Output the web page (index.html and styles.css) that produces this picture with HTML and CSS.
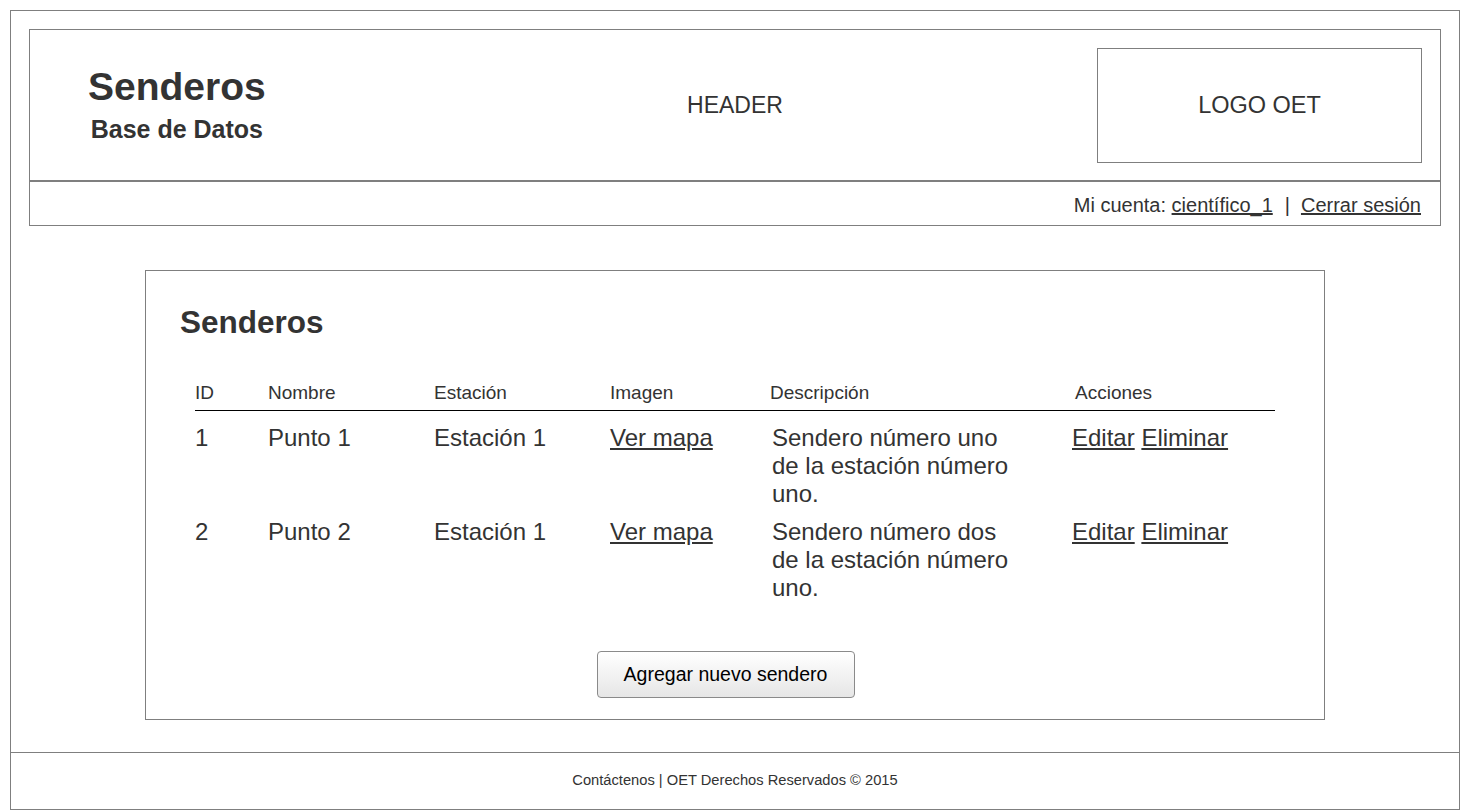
FILE: index.html
```html
<!DOCTYPE html>
<html lang="es">
<head>
    <meta charset="UTF-8">
    <meta name="viewport" content="width=device-width, initial-scale=1.0">
    <title>Senderos - Base de Datos</title>
    <link rel="stylesheet" href="styles.css">
</head>
<body>
    <div class="page">
        <header class="header">
            <div class="header-top">
                <div class="brand">
                    <h1>Senderos</h1>
                    <h2>Base de Datos</h2>
                </div>
                <div class="header-label">HEADER</div>
                <div class="logo">LOGO OET</div>
            </div>
            <nav class="account">
                Mi cuenta: <a href="#">científico_1</a><span class="sep">|</span><a href="#">Cerrar sesión</a>
            </nav>
        </header>

        <main class="main">
            <section class="card">
                <h3 class="card-title">Senderos</h3>
                <table class="trails">
                    <colgroup>
                        <col style="width: 73px">
                        <col style="width: 166px">
                        <col style="width: 176px">
                        <col style="width: 160px">
                        <col style="width: 302px">
                        <col>
                    </colgroup>
                    <thead>
                        <tr>
                            <th>ID</th>
                            <th>Nombre</th>
                            <th>Estación</th>
                            <th>Imagen</th>
                            <th>Descripción</th>
                            <th class="actions-head">Acciones</th>
                        </tr>
                    </thead>
                    <tbody>
                        <tr>
                            <td>1</td>
                            <td>Punto 1</td>
                            <td>Estación 1</td>
                            <td><a href="#">Ver mapa</a></td>
                            <td class="desc">Sendero número uno de la estación número uno.</td>
                            <td class="actions"><a href="#">Editar</a> <a href="#">Eliminar</a></td>
                        </tr>
                        <tr>
                            <td>2</td>
                            <td>Punto 2</td>
                            <td>Estación 1</td>
                            <td><a href="#">Ver mapa</a></td>
                            <td class="desc">Sendero número dos de la estación número uno.</td>
                            <td class="actions"><a href="#">Editar</a> <a href="#">Eliminar</a></td>
                        </tr>
                    </tbody>
                </table>
                <div class="card-footer">
                    <button class="btn">Agregar nuevo sendero</button>
                </div>
            </section>
        </main>

        <footer class="footer">
            Contáctenos | OET Derechos Reservados © 2015
        </footer>
    </div>
</body>
</html>
```

FILE: styles.css
```css
* {
    box-sizing: border-box;
}
body {
    margin: 0;
    padding: 10px 0 0 10px;
    font-family: "Liberation Sans", Arial, sans-serif;
    color: #333;
    background: #fff;
}
a {
    color: #333;
    text-decoration: underline;
}
.page {
    width: 1450px;
    height: 800px;
    border: 1px solid #7f7f7f;
    display: flex;
    flex-direction: column;
}
.header {
    margin: 18px 18px 0;
    border: 1px solid #7f7f7f;
}
.header-top {
    height: 152px;
    padding: 18px 18px 17px;
    border-bottom: 2px solid #7f7f7f;
    display: grid;
    grid-template-columns: 1fr auto 1fr;
    align-items: center;
}
.brand {
    justify-self: start;
    padding-left: 40px;
    text-align: center;
}
.brand h1 {
    margin: 0;
    font-size: 39px;
    line-height: 40px;
}
.brand h2 {
    margin: 7px 0 0;
    font-size: 25px;
    line-height: 30px;
}
.header-label {
    font-size: 23px;
}
.logo {
    justify-self: end;
    width: 325px;
    height: 115px;
    border: 1px solid #7f7f7f;
    display: flex;
    align-items: center;
    justify-content: center;
    font-size: 23.5px;
}
.account {
    height: 43px;
    padding-right: 19px;
    text-align: right;
    font-size: 20px;
    line-height: 46px;
}
.account .sep {
    margin: 0 11px 0 12px;
}
.main {
    flex: 1;
    padding-top: 44px;
}
.card {
    width: 1180px;
    margin: 0 auto;
    border: 1px solid #7f7f7f;
    padding: 33px 49px 21px;
}
.card-title {
    margin: 0 0 41px -15px;
    font-size: 31.5px;
    line-height: 36px;
}
.trails {
    width: 1080px;
    border-collapse: collapse;
    table-layout: fixed;
}
.trails th {
    padding: 0 0 5px;
    text-align: left;
    font-weight: normal;
    font-size: 19px;
    line-height: 24px;
    border-bottom: 1px solid #000;
}
.trails th.actions-head {
    padding-left: 3px;
}
.trails td {
    padding: 10px 0 0;
    vertical-align: top;
    font-size: 24px;
    line-height: 28px;
}
.trails tbody tr:first-child td {
    padding-top: 13px;
}
.trails td.desc {
    padding-left: 2px;
    padding-right: 52px;
}
.trails td.actions {
    white-space: nowrap;
}
.card-footer {
    margin-top: 49px;
    padding-right: 19px;
    display: flex;
    justify-content: center;
}
.btn {
    width: 258px;
    height: 47px;
    font-family: "Liberation Sans", Arial, sans-serif;
    font-size: 19.5px;
    color: #000;
    border: 1px solid #8a8a8a;
    border-radius: 4px;
    background: linear-gradient(#fff, #e6e6e6);
    cursor: pointer;
}
.footer {
    height: 57px;
    border-top: 1px solid #7f7f7f;
    display: flex;
    align-items: center;
    justify-content: center;
    font-size: 14.7px;
    padding-bottom: 2px;
}
```
